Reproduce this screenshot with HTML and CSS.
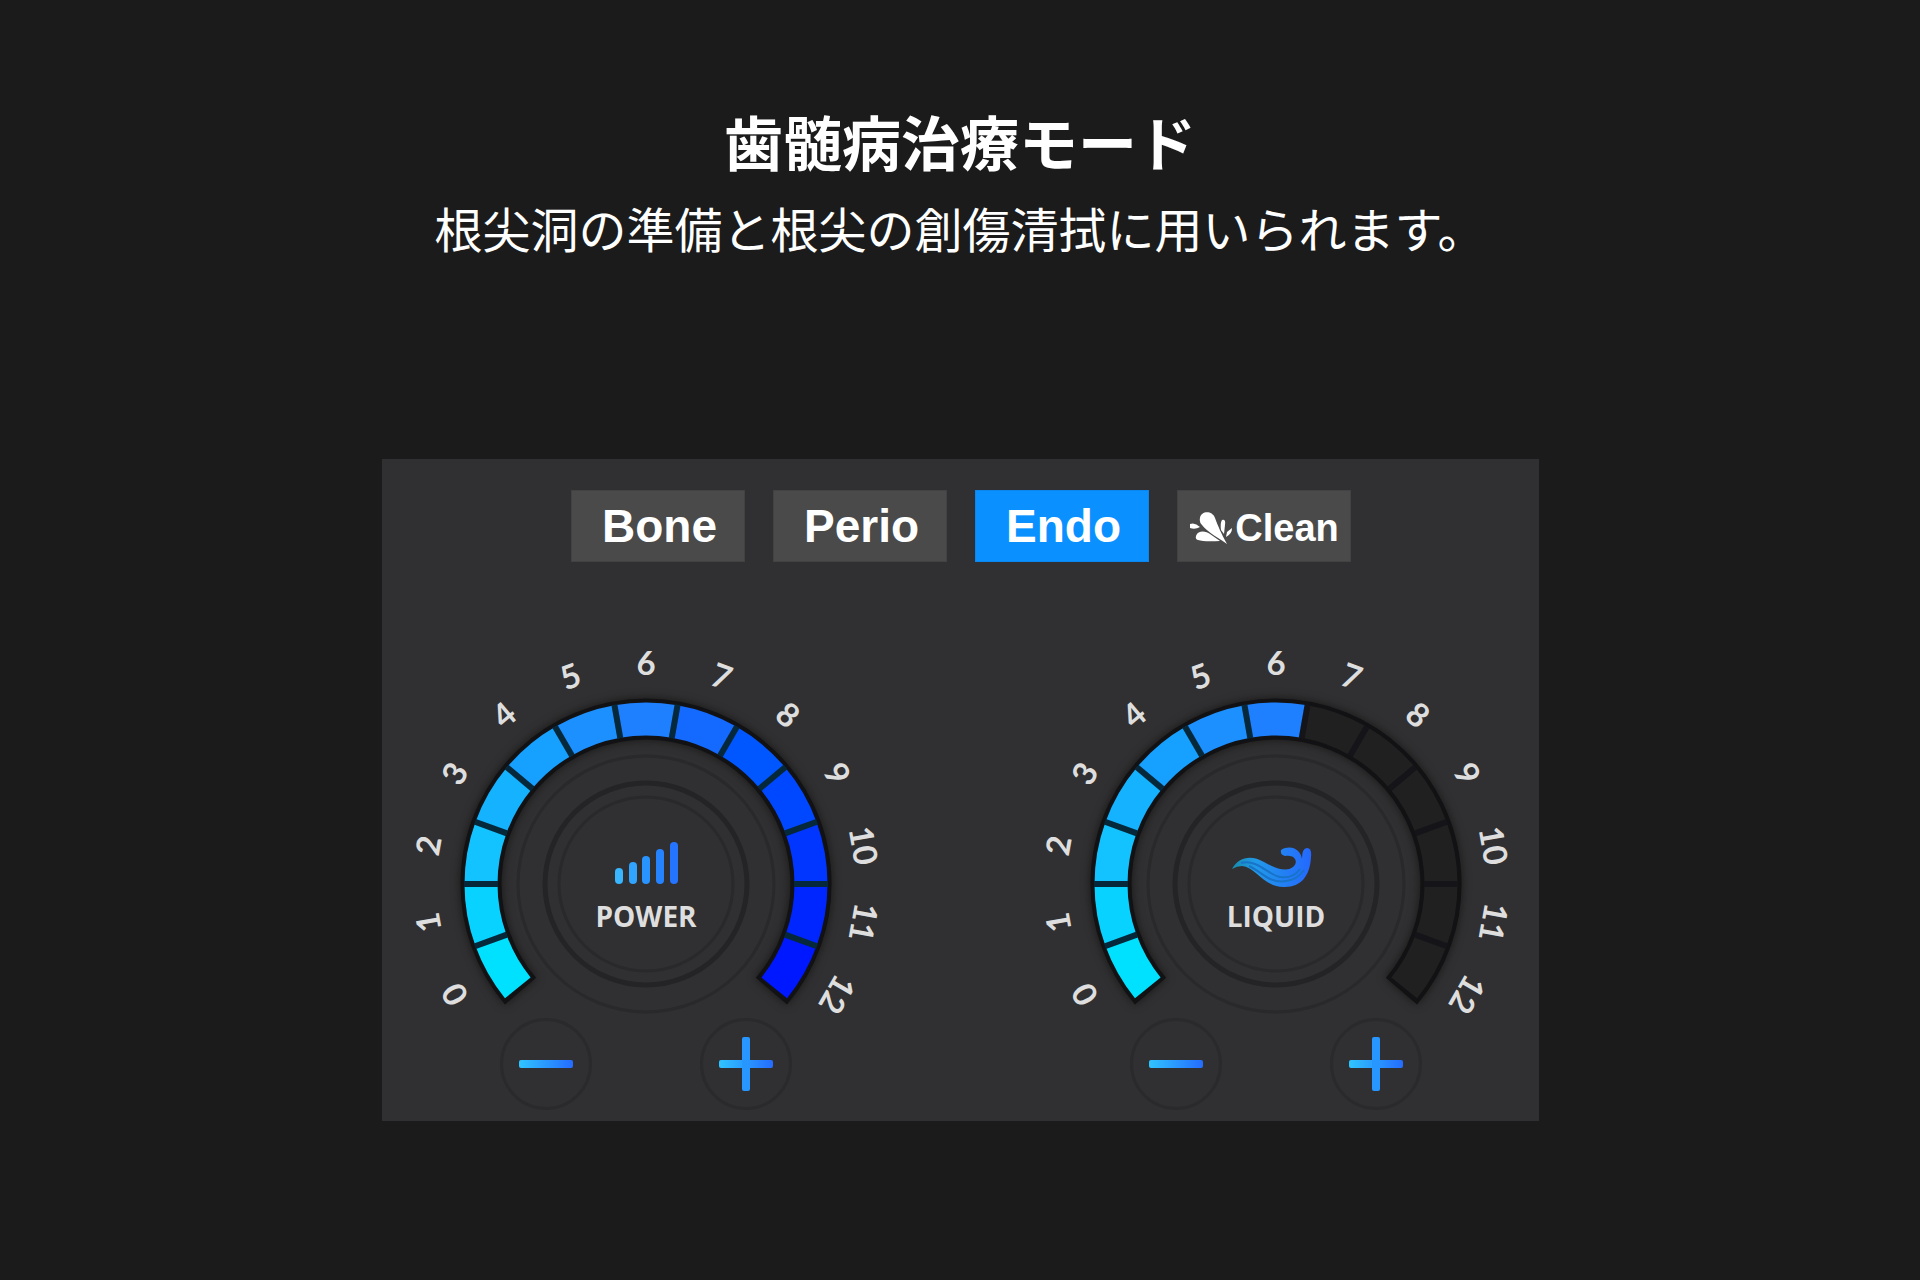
FILE: index.html
```html
<!DOCTYPE html>
<html lang="ja">
<head>
    <meta charset="UTF-8">
    <meta name="viewport" content="width=device-width, initial-scale=1.0">
    <title>歯髄病治療モード</title>
    <link rel="stylesheet" href="styles.css">
</head>
<body>
    <header class="intro">
        <h1>歯髄病治療モード</h1>
        <p>根尖洞の準備と根尖の創傷清拭に用いられます。</p>
    </header>

    <main class="panel">
        <div class="modes">
            <button type="button" class="mode">Bone</button>
            <button type="button" class="mode">Perio</button>
            <button type="button" class="mode active">Endo</button>
            <button type="button" class="mode clean">
                <svg width="44" height="34" viewBox="0 0 44 34" fill="#fff" aria-hidden="true">
                    <path d="M11 7C12 0 23-1 26 7C29 15 32 22 38 33C30 27 18 21 13 14Q10 11 11 7Z"/>
                    <path d="M1 13Q6 11 11 16Q6 19 1 17Z"/>
                    <path d="M7 25C9 19 17 20 21 23L31 30Q15 31 9 29Q6 28 7 25Z"/>
                    <path d="M33 9Q37 8 36 14L35 23L32 19Q31 12 33 9Z"/>
                    <path d="M43 17Q43 23 37 26L38 21Z"/>
                </svg>Clean
            </button>
        </div>

        <div class="dials">
            <section class="dial">
                <svg class="gauge" data-value="13" viewBox="-250 -250 500 384">
                    <g class="scale"></g>
                    <g class="bars" stroke-width="8" stroke-linecap="round">
                        <path stroke="#38b6ff" d="M-27-12V-4"/>
                        <path stroke="#30a4ff" d="M-13-18V-4"/>
                        <path stroke="#2894ff" d="M0-24V-4"/>
                        <path stroke="#2583ff" d="M14-31V-4"/>
                        <path stroke="#2474ff" d="M28-38V-4"/>
                    </g>
                    <text class="name" y="43">POWER</text>
                </svg>
                <div class="controls">
                    <button type="button" class="step" aria-label="POWER -">
                        <svg width="54" height="54" viewBox="0 0 54 54"><rect y="23" width="54" height="8" rx="2" fill="url(#blue)"/></svg>
                    </button>
                    <button type="button" class="step" aria-label="POWER +">
                        <svg width="54" height="54" viewBox="0 0 54 54"><rect y="23" width="54" height="8" rx="2" fill="url(#blue)"/><rect x="23" width="8" height="54" rx="2" fill="#2796ff"/></svg>
                    </button>
                </div>
            </section>

            <section class="dial">
                <svg class="gauge" data-value="7" viewBox="-250 -250 500 384">
                    <defs>
                        <linearGradient id="blue">
                            <stop offset="0" stop-color="#30c4ff"/>
                            <stop offset="1" stop-color="#246cff"/>
                        </linearGradient>
                        <linearGradient id="wave">
                            <stop offset="0" stop-color="#168cab"/>
                            <stop offset="0.3" stop-color="#2299e8"/>
                            <stop offset="1" stop-color="#2468ff"/>
                        </linearGradient>
                    </defs>
                    <g class="scale"></g>
                    <path fill="url(#wave)" d="M-44-15C-37-28-24-29-12-22C0-15 11-12 17-17C23-22 19-30 9-28Q4-29 5-34C15-40 25-34 26-25Q26-36 31-36Q36-36 35-27C34-8 25 3 9 3C-12 4-20-17-34-18Q-39-18-44-15Z"/>
                    <path class="ripple" d="M-35-21C-18-25-8-9 4-7Q17-5 24-15M-27-18C-15-13-7 0 10-3Q21-4 28-14"/>
                    <text class="name" y="43">LIQUID</text>
                </svg>
                <div class="controls">
                    <button type="button" class="step" aria-label="LIQUID -">
                        <svg width="54" height="54" viewBox="0 0 54 54"><rect y="23" width="54" height="8" rx="2" fill="url(#blue)"/></svg>
                    </button>
                    <button type="button" class="step" aria-label="LIQUID +">
                        <svg width="54" height="54" viewBox="0 0 54 54"><rect y="23" width="54" height="8" rx="2" fill="url(#blue)"/><rect x="23" width="8" height="54" rx="2" fill="#2796ff"/></svg>
                    </button>
                </div>
            </section>
        </div>
    </main>

    <script src="script.js"></script>
</body>
</html>
```
FILE: styles.css
```css
* {
    margin: 0;
    padding: 0;
    box-sizing: border-box;
}

body {
    background-color: #1b1b1b;
    color: #fff;
    font-family: "Noto Sans CJK JP", sans-serif;
    padding: 97px 20px 40px;
}

.intro {
    text-align: center;
}

.intro h1 {
    font-size: 59px;
    font-weight: bold;
    line-height: 87px;
}

.intro p {
    font-size: 48px;
    line-height: 86px;
}

.panel {
    max-width: 1157px;
    margin: 189px auto 0;
    padding: 31px 10px 11px 12px;
    background-color: #303032;
}

.modes {
    display: flex;
    flex-wrap: wrap;
    justify-content: center;
    gap: 28px;
}

.mode {
    display: flex;
    justify-content: center;
    align-items: center;
    width: 174px;
    height: 72px;
    padding-left: 3px;
    border: 1px solid #424243;
    background-color: #4a4a4a;
    color: #fff;
    font-family: "Liberation Sans", Arial, sans-serif;
    font-size: 46px;
    font-weight: bold;
    cursor: pointer;
}

.mode.active {
    background-color: #0a91ff;
    border-color: #0a86ee;
}

.mode.clean {
    gap: 2px;
    font-size: 38px;
    padding: 4px 0 0;
}

.dials {
    display: flex;
    flex-wrap: wrap;
    justify-content: center;
    gap: 40px 130px;
    margin-top: 72px;
}

.dial {
    flex: 0 1 500px;
}

.gauge {
    display: block;
    width: 100%;
}

.track {
    fill: none;
    stroke: #121214;
    stroke-width: 41;
    filter: drop-shadow(0 0 5px #161616);
}

.segment {
    fill: none;
    stroke-width: 33;
}

.divider {
    stroke: #151519;
    stroke-width: 6;
}

.divider.on {
    stroke: #05283b;
}

.ring {
    fill: none;
    stroke: #29292b;
    stroke-width: 3;
}

.ring.dark {
    stroke: #242426;
    stroke-width: 5;
}

.number {
    fill: #dedede;
    font-family: Lato, sans-serif;
    font-size: 33px;
    font-weight: bold;
    text-anchor: middle;
}

.name {
    fill: #dedede;
    font-family: "Open Sans", "Noto Sans", sans-serif;
    font-size: 28px;
    font-weight: bold;
    text-anchor: middle;
}

.ripple {
    fill: none;
    stroke: #1774c8;
    stroke-width: 2;
}

.controls {
    display: flex;
    justify-content: center;
    gap: 108px;
}

.step {
    display: flex;
    justify-content: center;
    align-items: center;
    width: 92px;
    height: 92px;
    border: 3px solid #2a2a2c;
    border-radius: 50%;
    background: none;
    cursor: pointer;
}
```
FILE: script.js
```javascript
const SVG_NS = 'http://www.w3.org/2000/svg';
const colors = [
    '#00e1ff', '#08d2ff', '#12c3ff', '#14b2ff', '#16a0ff', '#1c90ff', '#1e80ff',
    '#1469ff', '#0057ff', '#0048ff', '#0036ff', '#0026ff', '#0018ff'
];

function add(parent, tag, attrs) {
    const el = document.createElementNS(SVG_NS, tag);
    for (const key in attrs) {
        el.setAttribute(key, attrs[key]);
    }
    parent.appendChild(el);
    return el;
}

// angles are in degrees, clockwise from the top
function arc(from, to, r) {
    const a = from * Math.PI / 180;
    const b = to * Math.PI / 180;
    const large = to - from > 180 ? 1 : 0;
    return `M${r * Math.sin(a)} ${-r * Math.cos(a)}A${r} ${r} 0 ${large} 1 ${r * Math.sin(b)} ${-r * Math.cos(b)}`;
}

document.querySelectorAll('.gauge').forEach(function (gauge) {
    const scale = gauge.querySelector('.scale');
    const value = Number(gauge.dataset.value);

    add(scale, 'path', { class: 'track', d: arc(-130.5, 130.5, 165) });

    for (let i = 0; i < 13; i++) {
        const angle = i * 20 - 120;
        add(scale, 'path', {
            class: 'segment',
            stroke: i < value ? colors[i] : '#202021',
            d: arc(angle - (i === 0 ? 9 : 10), angle + (i === 12 ? 9 : 10), 165)
        });
    }

    for (let i = 1; i < 13; i++) {
        add(scale, 'path', {
            class: i < value ? 'divider on' : 'divider',
            d: 'M0-182V-148',
            transform: `rotate(${i * 20 - 130})`
        });
    }

    for (let i = 0; i < 13; i++) {
        add(scale, 'text', {
            class: 'number',
            y: -209,
            transform: `rotate(${i * 20 - 120})`
        }).textContent = i;
    }

    add(scale, 'circle', { class: 'ring', r: 128 });
    add(scale, 'circle', { class: 'ring dark', r: 101 });
    add(scale, 'circle', { class: 'ring', r: 87 });
});
```
